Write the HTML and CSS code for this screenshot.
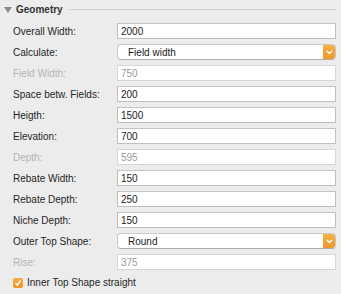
FILE: index.html
```html
<!DOCTYPE html>
<html>
<head>
<meta charset="utf-8">
<link rel="stylesheet" href="styles.css">
</head>
<body>
<div class="panel">
  <div class="header">
    <svg class="tri" width="8" height="6" viewBox="0 0 8 6"><polygon points="0,0 8,0 4,6" fill="#8a8a8a"/></svg>
    <span class="title">Geometry</span>
    <span class="rule"></span>
  </div>
  <div class="form">
    <label class="lbl">Overall Width:</label>
    <div class="field">2000</div>

    <label class="lbl">Calculate:</label>
    <div class="select"><span class="sel-text">Field width</span><span class="sel-btn"><svg width="7" height="5" viewBox="0 0 7 5"><polyline points="1,1 3.5,3.5 6,1" fill="none" stroke="#fff" stroke-width="1.4"/></svg></span></div>

    <label class="lbl dis">Field Width:</label>
    <div class="field dis">750</div>

    <label class="lbl">Space betw. Fields:</label>
    <div class="field">200</div>

    <label class="lbl">Heigth:</label>
    <div class="field">1500</div>

    <label class="lbl">Elevation:</label>
    <div class="field">700</div>

    <label class="lbl dis">Depth:</label>
    <div class="field dis">595</div>

    <label class="lbl">Rebate Width:</label>
    <div class="field">150</div>

    <label class="lbl">Rebate Depth:</label>
    <div class="field">250</div>

    <label class="lbl">Niche Depth:</label>
    <div class="field">150</div>

    <label class="lbl">Outer Top Shape:</label>
    <div class="select"><span class="sel-text">Round</span><span class="sel-btn"><svg width="7" height="5" viewBox="0 0 7 5"><polyline points="1,1 3.5,3.5 6,1" fill="none" stroke="#fff" stroke-width="1.4"/></svg></span></div>

    <label class="lbl dis">Rise:</label>
    <div class="field dis">375</div>
  </div>
  <div class="check-row">
    <span class="checkbox"><svg width="8" height="8" viewBox="0 0 8 8"><polyline points="1.5,4.2 3.3,6.2 6.6,1.4" fill="none" stroke="#fff" stroke-width="1.4"/></svg></span>
    <span class="check-label">Inner Top Shape straight</span>
  </div>
</div>
</body>
</html>
```
FILE: styles.css
```css
html, body {
  margin: 0;
  padding: 0;
  background: #ececec;
}
body {
  width: 341px;
  height: 294px;
  overflow: hidden;
  font-family: "Liberation Sans", Arial, sans-serif;
  font-size: 10px;
  color: #262626;
}
.panel {
  display: flex;
  flex-direction: column;
}
.header {
  display: flex;
  align-items: center;
  height: 19px;
  padding-left: 4px;
  padding-right: 5px;
}
.tri {
  display: block;
  margin-right: 4px;
}
.title {
  font-weight: bold;
  font-size: 10px;
  color: #333;
}
.rule {
  flex: 1;
  height: 1px;
  background: #d2d2d2;
  margin-left: 6px;
}
.form {
  display: grid;
  grid-template-columns: 104px 219px;
  grid-auto-rows: 16px;
  row-gap: 5px;
  padding-left: 13px;
  margin-top: 4px;
}
.lbl {
  display: flex;
  align-items: center;
}
.lbl.dis {
  color: #b5b5b5;
}
.field {
  box-sizing: border-box;
  background: #fff;
  border: 1px solid #bfbfbf;
  border-top-color: #c4c4c4;
  display: flex;
  align-items: center;
  padding-left: 3px;
  color: #222;
}
.field.dis {
  border-color: #d6d6d6;
  color: #9a9a9a;
}
.select {
  box-sizing: border-box;
  background: #fff;
  border: 1px solid #c8c8c8;
  border-bottom-color: #b0b0b0;
  border-radius: 4px;
  display: flex;
  align-items: center;
  position: relative;
  overflow: hidden;
}
.sel-text {
  flex: 1;
  padding-left: 10px;
  color: #222;
}
.sel-btn {
  width: 13px;
  height: 16px;
  margin: -1px -1px -1px 0;
  background: linear-gradient(#f7b34d, #ec9526);
  border-radius: 0 4px 4px 0;
  display: flex;
  align-items: center;
  justify-content: center;
}
.sel-btn svg {
  display: block;
}
.check-row {
  display: flex;
  align-items: center;
  padding-left: 13px;
  margin-top: 7px;
}
.checkbox {
  width: 10px;
  height: 10px;
  border-radius: 2px;
  background: linear-gradient(#f5ad45, #ea9426);
  display: flex;
  align-items: center;
  justify-content: center;
  margin-right: 4px;
}
.checkbox svg {
  display: block;
}
.check-label {
  color: #262626;
}
```
